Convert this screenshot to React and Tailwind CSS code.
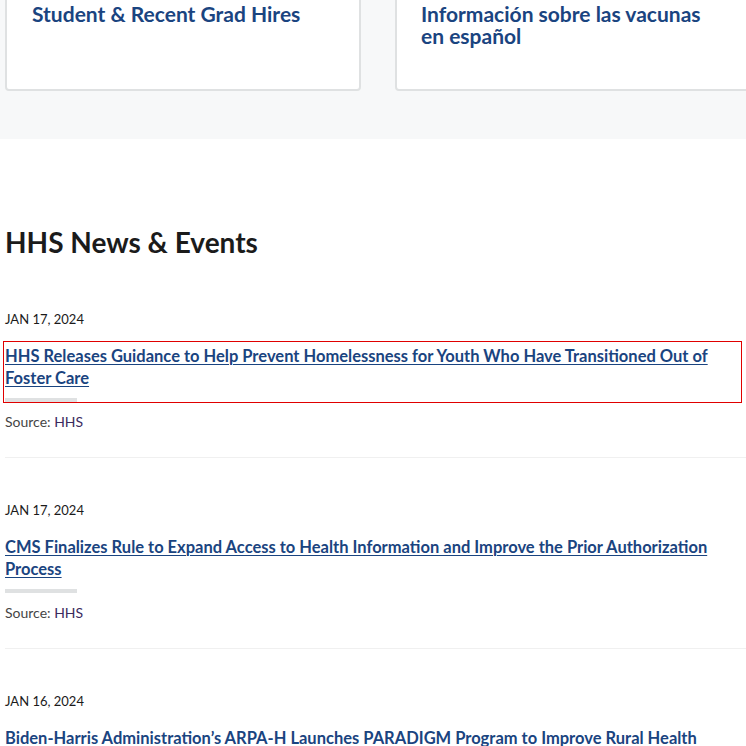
import React from "react";

const items = [
  {
    date: "JAN 17, 2024",
    title:
      "HHS Releases Guidance to Help Prevent Homelessness for Youth Who Have Transitioned Out of Foster Care",
    focused: true,
  },
  {
    date: "JAN 17, 2024",
    title:
      "CMS Finalizes Rule to Expand Access to Health Information and Improve the Prior Authorization Process",
  },
  {
    date: "JAN 16, 2024",
    title:
      "Biden-Harris Administration\u2019s ARPA-H Launches PARADIGM Program to Improve Rural Health",
  },
];

export default function App() {
  return (
    <div
      className="w-[746px] h-[746px] overflow-hidden bg-white text-[#1b1b1b]"
      style={{ fontFamily: "Lato, 'Source Sans Pro', 'Liberation Sans', sans-serif" }}
    >
      <section className="bg-[#f7f8f9] pb-[48px]">
        <div className="flex gap-[34px] pl-[5px] -mt-[40px]">
          <div className="w-[356px] shrink-0 bg-white border-2 border-[#dfe1e2] rounded-[4px] pt-[41px] pb-[42px] px-[25px]">
            <h3 className="text-[21px] leading-[22px] font-bold text-[#1a4480]">
              Student &amp; Recent Grad Hires
            </h3>
          </div>
          <div className="w-[400px] shrink-0 bg-white border-2 border-[#dfe1e2] rounded-[4px] pt-[41px] pb-[42px] pl-[24px] pr-[77px]">
            <h3 className="text-[21px] leading-[22px] font-bold text-[#1a4480]">
              Información sobre las vacunas en español
            </h3>
          </div>
        </div>
      </section>

      <section className="pl-[5px] pt-[85px]">
        <h2 className="text-[28px] leading-[36px] font-bold text-[#1b1b1b]">
          HHS News &amp; Events
        </h2>
        <div className="mt-[49px]">
          {items.map((it, i) => (
            <div key={i} className="border-b border-[#f0f0f0] pb-[25px] mb-[42px]">
              <div className="text-[13px] leading-[20px] text-[#1b1b1b]">{it.date}</div>
              <a
                href="#"
                className={
                  "block mt-[13px] pt-[3px] pr-[30px] mr-[5px] text-[16.5px] leading-[22px] font-bold text-[#1a4480] " +
                  (it.focused ? "outline outline-1 outline-[#e00000] -ml-[1px] pl-[1px]" : "")
                }
              >
                <span className="underline underline-offset-[2px] decoration-1">
                  {it.title}
                </span>
                <div className="mt-[9px] w-[72px] h-[4px] bg-[#dfe1e2]" />
              </a>
              <div className="mt-[10px] text-[14px] leading-[20px] text-[#454545]">
                Source: <span className="text-[#3b2a5e]">HHS</span>
              </div>
            </div>
          ))}
        </div>
      </section>
    </div>
  );
}
